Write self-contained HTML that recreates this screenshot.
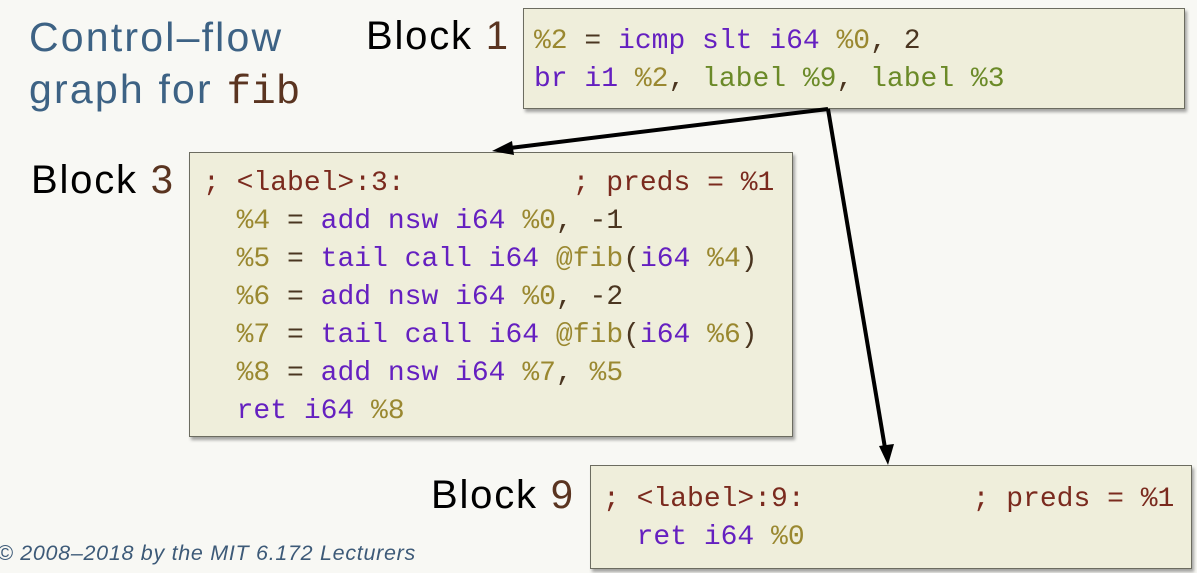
<!DOCTYPE html>
<html><head><meta charset="utf-8"><style>
body{margin:0;width:1197px;height:573px;background:#f8f8f4;position:relative;overflow:hidden;font-family:"Liberation Sans",sans-serif}
.t{position:absolute;font-size:41px;color:#3d6284;white-space:nowrap;letter-spacing:2.2px}
.lab{position:absolute;font-size:40px;color:#000;white-space:nowrap;letter-spacing:1.8px}
.lab b{font-weight:normal;color:#5a3420}
.box{position:absolute;background:#efeedb;border:1.5px solid #6c6c60;box-shadow:2px 3px 3px rgba(0,0,0,.35)}
.c{position:absolute;font-family:"Liberation Mono",monospace;font-size:28px;white-space:pre;line-height:38px}
.p{color:#6520c0}.o{color:#9a8830}.k{color:#4a3520}.g{color:#6b8a28}.m{color:#7a2a1e}
.fib{font-family:"Liberation Mono",monospace;color:#5a3420;letter-spacing:0}
.cp{position:absolute;left:-3px;top:541px;font-size:21.5px;font-style:italic;color:#3d5a78;white-space:nowrap;letter-spacing:0.7px}
</style></head><body>
<div class="t" style="left:29px;top:14px">Control–flow</div>
<div class="t" style="left:29px;top:66px">graph for <span class="fib">fib</span></div>
<div class="lab" style="left:366px;top:14px">Block <b>1</b></div>
<div class="lab" style="left:31px;top:158px">Block <b>3</b></div>
<div class="lab" style="left:431px;top:473px">Block <b>9</b></div>

<div class="box" style="left:523px;top:8px;width:660px;height:99px"></div>
<div class="c" style="left:534px;top:23px"><span class="o">%2</span> <span class="k">=</span> <span class="p">icmp slt i64</span> <span class="o">%0</span><span class="k">, 2</span>
<span class="p">br i1</span> <span class="o">%2</span><span class="k">,</span> <span class="g">label %9</span><span class="k">,</span> <span class="g">label %3</span></div>

<div class="box" style="left:189px;top:152px;width:602px;height:283px"></div>
<div class="c" style="left:203px;top:165px"><span class="m">; &lt;label&gt;:3:          ; preds = %1</span>
  <span class="o">%4</span> <span class="k">=</span> <span class="p">add nsw i64</span> <span class="o">%0</span><span class="k">, -1</span>
  <span class="o">%5</span> <span class="k">=</span> <span class="p">tail call i64</span> <span class="o">@fib</span><span class="k">(</span><span class="p">i64</span> <span class="o">%4</span><span class="k">)</span>
  <span class="o">%6</span> <span class="k">=</span> <span class="p">add nsw i64</span> <span class="o">%0</span><span class="k">, -2</span>
  <span class="o">%7</span> <span class="k">=</span> <span class="p">tail call i64</span> <span class="o">@fib</span><span class="k">(</span><span class="p">i64</span> <span class="o">%6</span><span class="k">)</span>
  <span class="o">%8</span> <span class="k">=</span> <span class="p">add nsw i64</span> <span class="o">%7</span><span class="k">,</span> <span class="o">%5</span>
  <span class="p">ret i64</span> <span class="o">%8</span></div>

<div class="box" style="left:590px;top:465px;width:600px;height:102px"></div>
<div class="c" style="left:603px;top:481px"><span class="m">; &lt;label&gt;:9:          ; preds = %1</span>
  <span class="p">ret i64</span> <span class="o">%0</span></div>

<svg style="position:absolute;left:0;top:0" width="1197" height="573">
<line x1="828" y1="109" x2="510" y2="148" stroke="#000" stroke-width="4"/>
<polygon points="492,151 512,141 514,155" fill="#000"/>
<line x1="828" y1="109" x2="885" y2="448" stroke="#000" stroke-width="4"/>
<polygon points="888,465 879,446 894,444" fill="#000"/>
</svg>
<div class="cp">© 2008–2018 by the MIT 6.172 Lecturers</div>
</body></html>
